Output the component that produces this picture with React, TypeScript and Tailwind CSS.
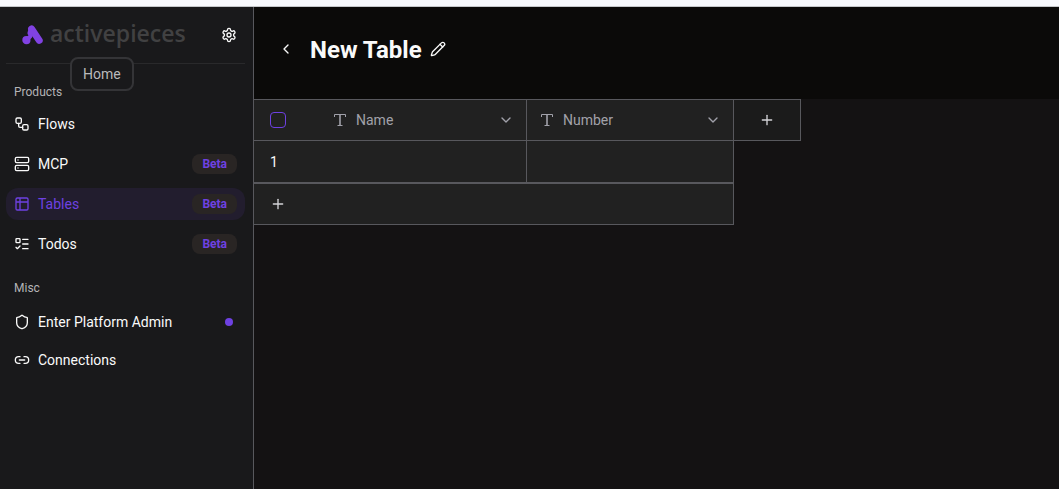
import React, { useState } from 'react';
import {
    ChevronDown,
    ChevronLeft,
    Link2,
    ListTodo,
    Pencil,
    Plus,
    Server,
    Shield,
    Table2,
    Workflow,
    type LucideIcon
} from 'lucide-react';

interface NavItem {
    label: string;
    icon: LucideIcon;
    beta?: boolean;
    dot?: boolean;
}

const PRODUCTS: NavItem[] = [
    { label: 'Flows', icon: Workflow },
    { label: 'MCP', icon: Server, beta: true },
    { label: 'Tables', icon: Table2, beta: true },
    { label: 'Todos', icon: ListTodo, beta: true }
];

const MISC: NavItem[] = [
    { label: 'Enter Platform Admin', icon: Shield, dot: true },
    { label: 'Connections', icon: Link2 }
];

const FIELDS = ['Name', 'Number'];

const Logo: React.FC = () => (
    <a href="#home" className="flex items-center gap-[6px]">
        <svg viewBox="0 0 22 20" className="h-5 w-[22px]" fill="none" stroke="#8142e3" strokeLinecap="round">
            <path d="M9.6 3.9 L17.2 15.4" strokeWidth="7" />
            <path d="M9 4.5 L8 8" strokeWidth="5" />
            <path d="M8.6 11 L4.6 15.2" strokeWidth="4" />
            <circle cx="4.4" cy="15.2" r="1.6" strokeWidth="5" />
        </svg>
        <span className="pb-1 font-['Open_Sans',sans-serif] text-[23px] leading-7 font-semibold text-[#414142]">activepieces</span>
    </a>
);

const GearIcon: React.FC = () => (
    <svg viewBox="0 0 24 24" className="size-4" fill="none" stroke="currentColor" strokeWidth="2" strokeLinecap="round" strokeLinejoin="round">
        <path d="M12.22 2h-.44a2 2 0 0 0-2 2v.18a2 2 0 0 1-1 1.73l-.43.25a2 2 0 0 1-2 0l-.15-.08a2 2 0 0 0-2.73.73l-.22.38a2 2 0 0 0 .73 2.73l.15.1a2 2 0 0 1 1 1.72v.51a2 2 0 0 1-1 1.74l-.15.09a2 2 0 0 0-.73 2.73l.22.38a2 2 0 0 0 2.73.73l.15-.08a2 2 0 0 1 2 0l.43.25a2 2 0 0 1 1 1.73V20a2 2 0 0 0 2 2h.44a2 2 0 0 0 2-2v-.18a2 2 0 0 1 1-1.73l.43-.25a2 2 0 0 1 2 0l.15.08a2 2 0 0 0 2.73-.73l.22-.39a2 2 0 0 0-.73-2.73l-.15-.08a2 2 0 0 1-1-1.74v-.5a2 2 0 0 1 1-1.74l.15-.09a2 2 0 0 0 .73-2.73l-.22-.38a2 2 0 0 0-2.73-.73l-.15.08a2 2 0 0 1-2 0l-.43-.25a2 2 0 0 1-1-1.73V4a2 2 0 0 0-2-2z" />
        <circle cx="12" cy="12" r="3" />
    </svg>
);

const TextTypeIcon: React.FC = () => (
    <svg viewBox="0 0 15 15" className="size-[15px]" fill="none" stroke="currentColor">
        <path d="M1.5 4V1.5h11V4M4.5 12.5h5" />
        <path d="M7 1.5v11" strokeWidth="2" strokeOpacity="0.8" />
    </svg>
);

const NavLink: React.FC<{ item: NavItem; active: boolean; onSelect: (label: string) => void }> = ({ item, active, onSelect }) => {
    const Icon = item.icon;
    return (
        <a
            href={`#${item.label}`}
            onClick={() => onSelect(item.label)}
            className={`flex h-8 items-center gap-2 rounded-xl px-2 text-sm ${active ? 'bg-[#221d2e] text-[#6e41e2]' : 'text-[#fafafa]'}`}
        >
            <Icon className="size-4" />
            <span className="flex-1">{item.label}</span>
            {item.beta && (
                <span className="rounded-lg bg-[#292524] px-[10px] py-[2px] text-xs font-bold text-[#6e41e2]">Beta</span>
            )}
            {item.dot && <span className="mr-1 size-2 rounded-full bg-[#6e41e2]" />}
        </a>
    );
};

const App: React.FC = () => {
    const [active, setActive] = useState('Tables');

    return (
        <div className="flex min-h-screen flex-col bg-[#141213] font-[Roboto,sans-serif] text-[#fafafa]">
            <div className="h-[7px] border-b border-[#c5c7ca] bg-[#f8f9fd]" />
            <div className="flex flex-1">
                <aside className="w-[254px] shrink-0 border-r border-[#58585d] bg-[#19191b] pr-2 pl-[6px]">
                    <header className="relative flex h-[57px] items-center justify-between border-b border-[#29292b] pr-2 pl-4">
                        <Logo />
                        <button type="button" aria-label="Settings">
                            <GearIcon />
                        </button>
                        {/* Logo tooltip */}
                        <div
                            role="tooltip"
                            className="absolute top-[50px] left-16 z-10 rounded-lg border-2 border-[#343437] bg-[#19191b] px-[11px] py-[5px] text-sm text-[#b9b9bb]"
                        >
                            Home
                        </div>
                    </header>

                    <nav className="pt-5">
                        <h2 className="px-2 text-xs text-[#b4b4b6]">Products</h2>
                        <div className="mt-2 flex flex-col gap-2">
                            {PRODUCTS.map(item => (
                                <NavLink key={item.label} item={item} active={active === item.label} onSelect={setActive} />
                            ))}
                        </div>
                        <h2 className="mt-5 px-2 text-xs text-[#b4b4b6]">Misc</h2>
                        <div className="mt-[10px] flex flex-col gap-[6px]">
                            {MISC.map(item => (
                                <NavLink key={item.label} item={item} active={active === item.label} onSelect={setActive} />
                            ))}
                        </div>
                    </nav>
                </aside>

                <main className="min-w-0 flex-1">
                    <header className="flex h-[92px] items-center bg-[#0b0a09] px-6 pb-2">
                        <button type="button" aria-label="Back" className="mr-4 flex w-4 justify-center">
                            <ChevronLeft className="size-4" />
                        </button>
                        <h1 className="pt-[2px] text-2xl font-bold">New Table</h1>
                        <button type="button" aria-label="Rename table" className="ml-2">
                            <Pencil className="size-4" />
                        </button>
                    </header>

                    <div className="flex items-start">
                        <table className="w-[480px] table-fixed border-separate border-spacing-0 bg-[#212121] text-left text-sm">
                            <thead>
                                <tr className="h-[42px]">
                                    <th className="w-[66px] border-y border-[#58585d] px-4 font-normal">
                                        <input
                                            type="checkbox"
                                            aria-label="Select all rows"
                                            className="block size-4 appearance-none rounded-sm border border-[#6e41e2]"
                                        />
                                    </th>
                                    {FIELDS.map(field => (
                                        <th key={field} className="border border-l-0 border-[#58585d] pr-3 pl-[13px] font-normal text-[#a1a1aa] last:w-[207px]">
                                            <div className="flex items-center gap-2">
                                                <TextTypeIcon />
                                                <span className="flex-1">{field}</span>
                                                <button type="button" aria-label={`${field} options`}>
                                                    <ChevronDown className="size-4" />
                                                </button>
                                            </div>
                                        </th>
                                    ))}
                                </tr>
                            </thead>
                            <tbody>
                                <tr className="h-[42px]">
                                    <td className="border-b border-[#58585d] px-4">1</td>
                                    <td className="border-r border-b border-[#58585d]" />
                                    <td className="border-r border-b border-[#58585d]" />
                                </tr>
                                <tr className="h-[42px]">
                                    <td colSpan={3} className="border border-l-0 border-[#58585d] px-4">
                                        <button type="button" aria-label="Add row" className="block">
                                            <Plus className="size-4 text-[#d4d4d8]" />
                                        </button>
                                    </td>
                                </tr>
                            </tbody>
                        </table>
                        <button
                            type="button"
                            aria-label="Add field"
                            className="flex h-[42px] w-[67px] items-center justify-center border border-l-0 border-[#58585d] bg-[#1b1b1b]"
                        >
                            <Plus className="size-4 text-[#d4d4d8]" />
                        </button>
                    </div>
                </main>
            </div>
        </div>
    );
};

export default App;
